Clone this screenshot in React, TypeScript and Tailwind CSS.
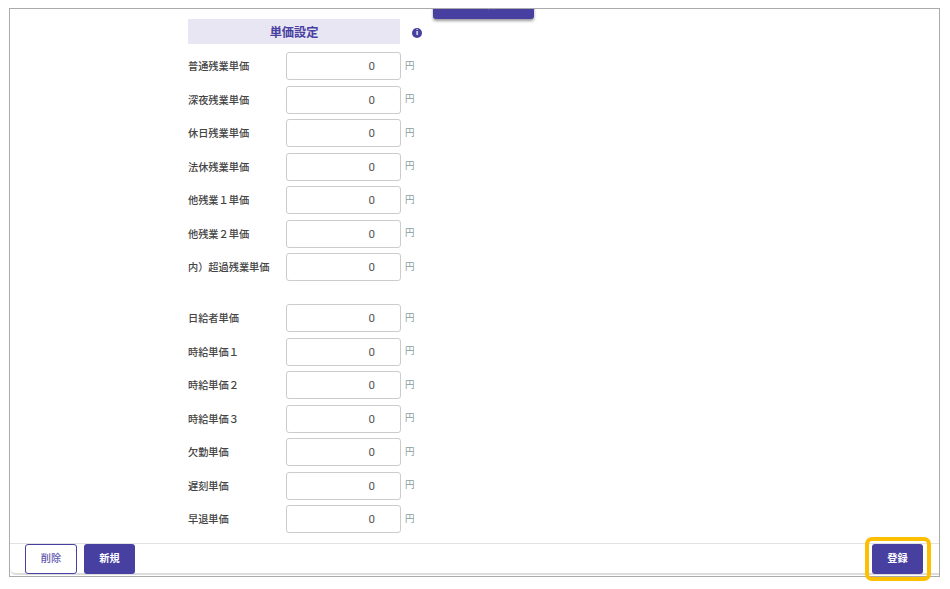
import React from 'react';

const font = { fontFamily: '"Roboto", "Noto Sans CJK JP", sans-serif' };

const overtimeRows = ['普通残業単価', '深夜残業単価', '休日残業単価', '法休残業単価', '他残業１単価', '他残業２単価', '内）超過残業単価'];
const basicRows = ['日給者単価', '時給単価１', '時給単価２', '時給単価３', '欠勤単価', '遅刻単価', '早退単価'];

function PriceRow({ label }: { label: string }) {
  return (
    <div className="flex items-center h-7">
      <label className="w-[98px] text-[10.2px] font-medium text-[#444] whitespace-nowrap translate-y-px">{label}</label>
      <div className="w-[115px] h-7 border border-[#ccc] rounded-[3px] bg-white flex items-center justify-end pr-[25px] text-[11.5px] text-[#555] pt-[2px]">
        0
      </div>
      <span className="ml-[4px] text-[9.5px] text-[#86a0a0]">円</span>
    </div>
  );
}

export default function App() {
  return (
    <div style={font} className="h-[589px] w-[950px] bg-white overflow-hidden pt-2 pl-[9px]">
      <div className="relative w-[931px] h-[569px] border border-[#aaa] overflow-hidden flex flex-col">
        {/* button scrolled out at the top */}
        <div className="absolute left-[423px] -top-[8px] w-[101px] h-[18px] bg-[#4840a0] rounded-[3px] shadow-[0_2px_3px_rgba(0,0,0,0.4)] text-[#d8d6ec] text-[11.5px] text-center whitespace-nowrap overflow-hidden">
          <span className="relative -top-[5px]">単価一括設定</span>
        </div>

        <div className="flex-1 pl-[178px] pt-[10px]">
          <div className="flex items-center">
            <div className="w-[212px] h-[25px] bg-[#e8e6f3] flex items-center justify-center text-[12.2px] font-bold text-[#4840a0] pt-[3px]">
              単価設定
            </div>
            <div className="ml-[12px] mt-[3px] w-[10px] h-[10px] rounded-full bg-[#4840a0] flex items-center justify-center text-white text-[8px] font-bold leading-none">
              i
            </div>
          </div>
          <div className="mt-[8px] flex flex-col gap-[5.5px]">
            {overtimeRows.map((r) => (
              <PriceRow key={r} label={r} />
            ))}
          </div>
          <div className="mt-[23px] flex flex-col gap-[5.5px]">
            {basicRows.map((r) => (
              <PriceRow key={r} label={r} />
            ))}
          </div>
        </div>

        {/* footer */}
        <div className="h-[32px] mb-[1px] border-t border-[#e2e2e2] border-b-2 border-b-[#ddd] rounded-bl-[6px] flex items-start justify-between pl-[15px] pr-[16px] text-[10.2px] font-bold pt-0 shrink-0">
          <div className="flex gap-[7px]">
            <button className="w-[52px] h-[30px] border border-[#4840a0] rounded-[3px] bg-white text-[#5f58ad] font-medium">削除</button>
            <button className="w-[51px] h-[30px] rounded-[3px] bg-[#4840a0] text-white">新規</button>
          </div>
          <button className="w-[51px] h-[30px] rounded-[3px] bg-[#4840a0] text-white">登録</button>
        </div>
      </div>
      {/* highlight round the register button */}
      <div className="absolute left-[865px] top-[537px] w-[66px] h-[44px] border-[4px] border-[#fdbf00] rounded-[7px]" />
    </div>
  );
}
